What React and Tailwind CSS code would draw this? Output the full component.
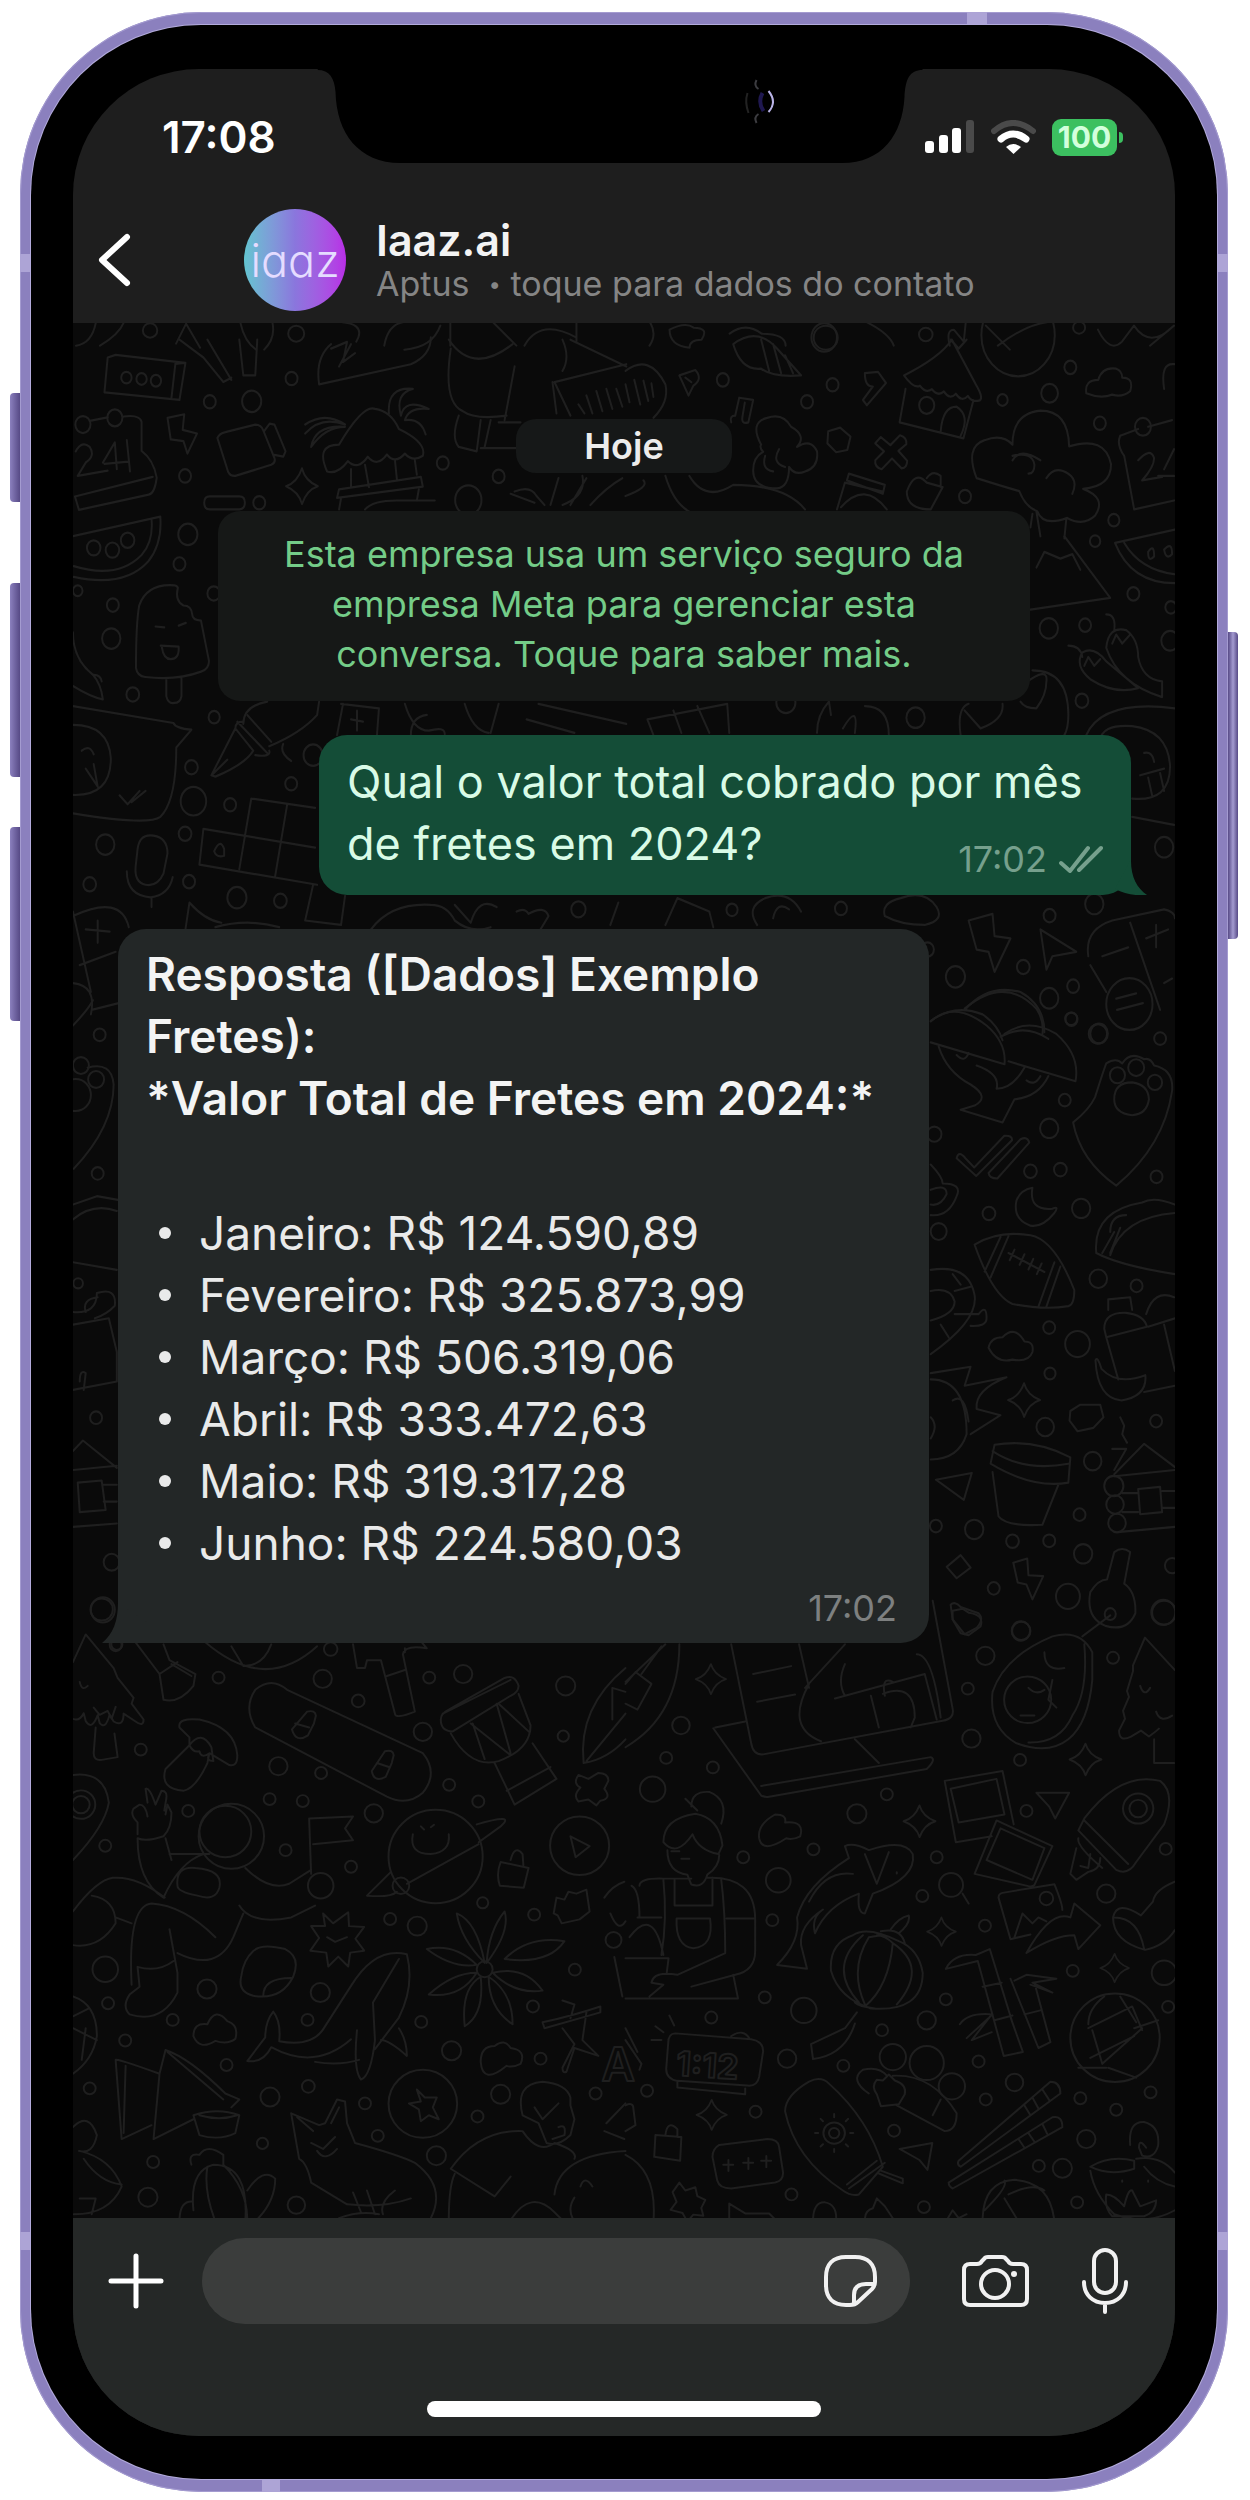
import React from "react";

const MONTHS = [
  ["Janeiro", "124.590,89"],
  ["Fevereiro", "325.873,99"],
  ["Março", "506.319,06"],
  ["Abril", "333.472,63"],
  ["Maio", "319.317,28"],
  ["Junho", "224.580,03"],
];

/* Wallpaper doodles, grouped by zone; each zone has its own drawing scale. */
const ZONES = [
  {
    t: "translate(0 322) scale(.4)",
    c: [[375, 22, 18], [740, 30, 20]],
    s: [],
    p: [
      "M190 60Q230 55 240 0M250 60Q300 30 310 0M440 55l25-50 35 60M600 0q10 50 40 70M680 0q10 40-20 70M830 0q90 0 60 50M960 60q10-60 60-60M1010 70q70-5 90-60M1125 0v60M1230 0l60 60M1310 60q40-70 130-20M1440 0v50",
    ],
  },
  {
    t: "translate(625 322) scale(.4)",
    c: [[750, 32, 17], [1133, 15, 15], [500, 40, 30]],
    s: [],
    p: [
      "M60 0q20 30 0 60M110 20q40-20 60-5 40 0 20 30-30 0-30 20-50-5-50-45M260 30q40-30 80 0 60 0 60 30M600 0q60 30 70 60M810 60q-10-40 10-40l25 30 5-50M900 10l60 60M930 60q80-60 140-60M1180 20q30 60 60 30l30-40q40 60 100 0M1310 60l60-50",
    ],
  },
  {
    t: "translate(0 340) scale(.3986 .4464)",
    c: [[317, 85, 13], [355, 88, 13], [391, 92, 13], [526, 139, 15], [631, 138, 24], [731, 87, 15], [464, 305, 15], [650, 365, 15], [1110, 276, 15], [1174, 359, 33], [1250, 306, 15], [471, 436, 24], [450, 502, 15], [283, 594, 15], [279, 669, 23], [333, 794, 16], [537, 845, 14], [536, 568, 16], [480, 957, 16], [485, 1033, 32], [577, 1041, 15], [730, 994, 15], [264, 1130, 23], [464, 1106, 16], [225, 1219, 16], [474, 1213, 15], [594, 1249, 24], [703, 1256, 16], [785, 930, 24], [208, 190, 19], [288, 175, 19], [235, 466, 17], [282, 471, 17], [320, 449, 17], [1450, 1275, 18], [195, 562, 12]],
    s: [[757, 328, 40]],
    p: [
      "M270 40L290 34 465 52 450 135 262 118ZM440 52L430 130M462 52l-22 2",
      "M420 175l42-8-4 35 36 8-24 45-10-28-32-4Z",
      "M545 220Q550 210 565 207L640 190Q655 190 660 203L688 265Q692 275 680 280L590 305Q578 306 572 296ZM662 205l14-17 12 2 28 60-6 12-22-4",
      "M225 182l45-8M310 172q40-5 45 12v65q30 20 38 60-5 35-20 38l-175 34-10-30 195-44M190 250q15-25 35-10 15 20-10 35l-20 30 75-12M258 275l30-45 5 60M262 278l60-5M318 225l8 70",
      "M765 190q50-30 100 0-60-20-100 20M780 240q10-50 85-45-50 0-85 45M820 295q-30-60 30-60 60-90 90-80 40 5 60 45 70 30 60 60-25 15-45-5-25 25-45 2-25 30-48 5-25 32-50 10-25 30-52 23ZM975 165q-5-60 60-55-45 10-30 60 10-40 70-15-50-5-60 25 40-5 52 32M850 335l205-28 5 22-215 25ZM915 280l10 50M990 268l5 45M880 290v40M1040 270l5 32M855 355l-5 25M1050 335l-5 25M915 380q20-20 80-20h95",
      "M512 365q0-14 14-14h74q14 0 14 14t-14 15h-74q-14 0-14-15Z",
      "M183 440L402 396q5 60-30 100-60 60-187 35M380 402q5 50-25 80-60 55-170 25",
      "M438 550q5 0 8 5-8 30 14 40 20 0 22 20 0 12 22 14l20 90q0 18-20 24-60 20-140 12-20-2-23-20 0-100 8-140 20-50 89-45ZM390 642l22 2M448 640l18-6M403 685l45 2q2 28-20 28-18 0-22-26M417 758v40q5 18 20 15 15 0 18-15v-40",
      "M183 655q0 60 50 95 20 20 25 55-30-5-75-30M235 750q18 0 20 15",
      "M183 820L435 858q5 12 45 15l-38 40q0 120-40 155-30 20-219-8M183 862q90 0 95 75 0 85-95 82M300 1020l20 20 30-30M330 1035l35-25M205 920q20-15 30 8M215 960l30 40M235 950l10 50",
      "M530 975l60-105 45 50q-20 30-95 58ZM595 855l75 70M590 870q0-15 20-15M640 930q40 5 35-10M670 810q-60 10-60 50M675 910q80-30 120-70l5-30M530 975l40-35M710 905q-10 20 20 38",
      "M630 1027L790 1048M630 1027L600 1185M510 1095l280 42M510 1095l-10 80 295 45M720 1040l-30 160M785 1220l-20 80 90 10 10-65M537 1145q15-30 25-5v15q-20 5-25-10",
      "M345 1140q5-35 40-30 35 5 35 40l-10 45q-15 30-45 25-28-5-25-40ZM318 1190q0 55 60 58 45-5 55-45M380 1250v20",
      "M183 1290q120-50 140 25M183 1280l45 180M200 1400l90-30M215 1320l60 5M245 1300v50M183 1440q60 5 45 70M230 1500l90-20",
      "M800 100q-10-60 30-90M800 100l230-45q50-20 50-60M830 20l40-15-10 45 30-20M850 60l30-50M450 0l60 40 50 55 20-10M520 0l60 90M600 0l10 80 30 0 5-80",
      "M1125 0q60 80 160 10M1130 20q-20 120 30 140 30 20 110 10M1290 60l-25 120M1150 170q-20 50 0 70l45 10 10-70M1215 240l15-60M1205 243l90 0M1250 185h55M1410 0q20 40 0 70M1390 95l180-40M1385 95l10 70M1390 95l40 75M1450 145l15 20M1470 125l15 40M1495 115l15 45M1520 110l15 45M1545 110l15 40M1430 0l140 60M1380 370l20-60M1410 370q60-20 50-65M1430 370l40-60M1280 345l60 20M1290 340q40-15 55 10l20 20M1480 370q40-40 80-60",
      "M620 840l60 60M855 815l95 10-5 60M860 815l-15 70M895 830v45M880 850l30 5M1015 815q20 60 60 60 40-10 40 8M1030 885q0-40 40-45M1165 815q20 60 60 65M1250 815l-20 65M1320 850l120 30M1350 815l220 45",
      "M465 1320l10-60q40 40 80 45M540 1315q80-20 160 0M930 1320q50-60 150-55 40 0 60 35M1140 1265l40 40q20-60 65-35M1140 1300q40 30 90 15M1295 1280q20-10 30 5 40-20 50 5l-20 30M1550 1260l-20 50",
    ],
  },
  {
    t: "translate(625 340) scale(.3986 .4464)",
    c: [[244, 90, 15], [455, 139, 15], [519, 101, 15], [945, 135, 13], [1115, 62, 15], [1063, 120, 21], [1189, 187, 15], [851, 351, 15], [1224, 404, 14], [1177, 451, 13], [1273, 569, 15], [1061, 646, 23], [1152, 639, 15], [1367, 599, 14], [1365, 674, 22], [1144, 808, 16], [727, 846, 23], [1350, 1136, 23], [1175, 1263, 23], [1063, 1289, 15], [997, 1404, 16], [827, 1426, 24], [1122, 1447, 15], [1062, 1474, 23], [1118, 1521, 15], [267, 1276, 14], [540, 1273, 15], [1187, 1553, 22], [755, 147, 19], [1297, 195, 20], [1263, 1487, 58], [984, -10, 92], [757, 1365, 16], [498, -5, 32], [402, 812, 24]],
    s: [],
    p: [
      "M0 70q60-40 100 30 10 40-30 75M0 100l10 40M22 90l15 55M45 92l12 45M65 98l5 30",
      "M135 80l40-12q20 20-5 35l-12 22ZM150 85l15 10",
      "M265 185q-5-15 10-15l10-40 35 5-12 50q-18 5-15-12l6-32",
      "M270 10q20 60 70 55 30 20 100 15l-60-60q-50-50-110-10ZM340 0l20 70M370 10l20 65M400 35l20 40",
      "M600 75q0 30 20 30l-25 30 10 12 48-50-20-25Z",
      "M698 80q90-40 120-80l60 100q20 30 10 36-20 5-30-10-15 15-30-5-15 15-30-5-15 12-30-5-15 10-30-8-15 8-40-23ZM702 110l-15 75 160 36 25-85M790 205q5-55 40-55 35 20 10 65M815 0l20 20 20-20",
      "M508 205l30-8 26 20-8 30-28 5-22-20Z",
      "M640 218l24 18 24-22q18 5 16 20l-20 15 22 22q0 16-14 17l-24-22-26 24q-18-5-16-20l22-20-22-18Z",
      "M340 235q-30-50 15-60 40-12 60 20 40 20 15 45 35-20 50 10 5 35-30 45-25 10-40-10 0 45-30 48-60 0-60-40 0-30 25-42-10-10-5-16M350 260q-10 30 20 35M385 245q-20 30 15 40",
      "M880 310q-30-70 20-85 45-15 70 10 0-70 70-76 70 0 72 80 90-25 105 40 0 50-70 55 60 20 30 60-30 25-70 5-60 20-75-15-30-10-45-45-40-10-107-29ZM970 260q50-10 55 20 0 20-15 20M1055 310q20-30 55-10 25 15 10 45M1030 385l10 55M1105 400l-5 45M970 270q20-30 70 0",
      "M1020 390l-5 30M1100 440l115 138-200 26M1030 510l20-35 40 15 30-10 20 35",
      "M530 380l20-60 95 20M560 300l90 25-5 20-90-30ZM540 375q60-60 115 5M705 340q20-50 50-20l40 10-30 50q-60 0-60-40ZM755 310q15-20 35-5v25M100 305q20 60 60 80M160 305q40 60 110 20 130 0 180 55M0 350q60-20 45-35",
      "M1155 120q-5-30 30-30 10-30 45-25 15 5 15 20 30 0 20 30-20 15-45 8-30 10-65-3ZM1350 110q-10-60 26-55",
      "M1240 215l45-15M1310 195l60-15M1240 215q-10 20 10 45l25 120 100-20M1285 270q30-30 40-5 0 20-30 50l50-8M1350 290l25-45M1335 305h40",
      "M1227 455l150-30M1227 455q40 90 150 90M1250 455q40 60 125 70M1310 475q15-20 15 10-15 15-15-10M1350 470q20-20 20 10-15 15-20-10",
      "M1205 615q25 0 20 35M1205 690q5-50 50-40 30 20 30 60 10 50 60 55v35q-110-30-140-110ZM1110 685q30 0 35 25M1145 700q30-15 60 20l80 60q-60 15-120-20-40-30-20-60ZM1220 680l10-20 15 20 20-20M1150 730l10-20 15 20 15-15",
      "M1020 740q90 0 90 100 0 30-10 45M1000 770q60-40 55-5 0 30-25 60-30 0-40-15M840 885q-10-60 20-70M850 830l40 40q60-20 55-55M480 880q0-40 30-70l5 30M545 870q40-60 30 10M600 820q60 0 60 65M55 850l200-35 5 65M55 850l15 35M120 830l20 50M180 820l30 60",
      "M1155 885q40-80 222-60M1190 900q0-40 80-35 90 10 95 90 0 80-95 72M1300 925q20-5 25 20M1290 975l60-15M1310 980l10 40M1340 970l10 40M1270 1068l105 18",
      "M100 1310l30-60 80 30 10 35M330 1310q-30-40 20-60 60-20 90 30M370 1295q10-40 40-20M650 1290q-10-30 40-40 60-20 90 20 20 30-30 40-60 0-100-20Z",
      "M860 1300l60-15 5 50 40 5-40 75-15-45-30-5Z",
      "M1040 1320l90 50-60 10-15 30Z",
      "M1160 1380q-10-60 60-80l130-25q27 5 27 20M1165 1400l40 60M1265 1305l75 195M1195 1380l65-20M1330 1310v50M1305 1340l55-20M1230 1475l50-12M1232 1500l65-15M1370 1430l-20 10",
      "M850 1500q60-60 140-40 60 30 60 90M765 1525q60-40 130-15 40 25 50 58M940 1560q60-30 120 5",
    ],
  },
  {
    t: "translate(0 1000) scale(.3986 .4209)",
    c: [[250, 82, 15], [203, 155, 20], [241, 188, 20], [245, 411, 15], [196, 672, 12], [241, 991, 15], [280, 1334, 20], [258, 1447, 30], [290, 1530, 15], [190, 225, 38]],
    s: [],
    p: [
      "M183 60q40-40 50-60M220 160q60-15 65 40 0 100-100 200M183 485l60-20 60 10M183 520q50-40 110-20M183 622l110 18",
      "M183 740q60 5 60-45 50-15 45 30-20 20-50 30M183 770l90-15 20 80v70l-110 20M215 740q-10-30 30-35M200 905q0-30 15-20l-5 40M183 1070l25-25 85 65M183 1115l110-10M195 1145l60-5 10 70-65 5ZM260 1150h33M260 1190h33M183 1250l110-8",
    ],
  },
  {
    t: "translate(625 1000) scale(.3986 .4209)",
    c: [[1117, 44, 15], [1184, 80, 23], [1340, 91, 15], [1233, 178, 19], [1280, 160, 20], [1327, 195, 18], [1101, 237, 15], [1062, 304, 23], [1015, 406, 16], [1090, 402, 16], [1331, 419, 15], [911, 506, 16], [1142, 494, 23], [1185, 661, 22], [1281, 678, 15], [1062, 777, 15], [1133, 816, 31], [1064, 886, 14], [1052, 1013, 22], [1330, 999, 15], [1171, 1094, 22], [1138, 1221, 15], [874, 1256, 23], [970, 1284, 16], [1062, 1283, 15], [1147, 1314, 23], [923, 1396, 15], [1109, 1415, 30], [991, 1497, 23], [1348, 1453, 30], [785, 549, 20], [778, 1248, 15], [774, 318, 18], [1370, 1342, 18], [1224, 1153, 24], [1227, 1197, 22], [1232, 1241, 22], [1215, 1457, 14]],
    s: [[999, 949, 40]],
    p: [
      "M850 20q100-80 180 0 20 30 15 60M765 50q60-50 140 10 50 40 45 92L765 100M950 80q60-40 130 0 60 50 48 112L960 145M785 110q20 60 80 90 50 30 10 50l-35 10 105 30 30-55q60-5 85-55M830 130q20 20 30-5M880 155q60 20 50 55 40 0 70-50M1005 190q20 15 35-10",
      "M1205 150q25-15 40 0 20-30 55-10 15-5 25 15 50 10 45 60-20 130-140 225-90-60-108-150 40-30 55-60 20-60 28-80ZM1225 235q0-40 45-40 40 5 42 40-5 35-42 38-45-5-45-38Z",
      "M830 375q5-20 22 0l22 22 75-75q20-2 20 10l-90 85ZM910 410l80-80q18-8 22 8l-80 85q-20 0-22-13Z",
      "M1020 445q-10 55 50 50 18-8 5 10-30 35-60 30-45-15-35-60 10-25 40-30ZM765 390q30 30 30 45 50 0 35 30-20 50-65 45M765 450q40-15 40 10-15 30-40 25",
      "M875 580q60-35 140-22 60 10 110 130 0 35-15 38-60 10-140-5-50-20-95-141ZM940 562l-40 82M960 560l-45 98M1075 622l-40 105M1090 632l-35 95M960 600l90 45M975 592l-12 25M1000 603l-12 25M1022 614l-12 25M1043 625l-12 25",
      "M1180 600q-10-100 115-120 30-15 82 5M1180 600q60 30 197 50M1215 605q30-90 162-100M1215 550q0-40 40-40M1195 600l30-50M1240 540l-25 60",
      "M765 640q95-15 110 60 10 60-110 140M765 690q50-10 60 25 0 30-60 45M820 650l20 25M825 690l40-10M825 745h60q20-25 20 10 0 20-40 18M790 770l20 30",
      "M910 825q5-25 35-25 30-30 55 10 25 0 20 25-10 25-50 18-40 10-60-28Z",
      "M1210 710l55-5 5 30M1210 710v25M1200 780q0-40 55-38 45 5 52 33L1205 800 1200 780M1205 800l30 100M1350 770l27 110M1310 775l67-20M1305 745q20-60 70-40M1178 855q5-12 15 20 40 40 110 15 5 50-60 60-60-5-65-95ZM1300 930l77-15",
      "M765 885l100-15-15 45 105-20q-80 30-75 75l60 15-75 45M765 900q90 0 90 130-20 60-90 60M820 950q30-20 40 50M765 990q20 20 0 50",
      "M1115 975l25-15 50 0 8 30-25 25-40 8-20-25ZM1240 990l10 20-5 20 12 20M1220 1065h35l-30 50M1225 1125l75-72 77 55M1225 1130l152-15M1285 1160l55-5 5 60-55 5ZM1245 1170h40M1245 1215h40M1345 1165h32M1345 1205h32M1240 1262l137-12",
      "M925 1055q100-15 190 30l-5 60q-90 15-195-45ZM920 1070q80 50 190 30M920 1120l15 105q20 25 110 20l40-95",
      "M778 1138l90-16-20 64ZM805 1345l35-28 25 30-35 25ZM972 1335l35-10 3 40 37 2-27 55-15-35-22-5ZM815 1435q10-10 25 5l45 15q15 15-5 35l-30 15-30-35ZM1225 1310q20-15 40 0l-15 75q30 20 28 70-20 45-75 30-50-20-38-80 20-30 42-30ZM1215 1460l-70 50",
    ],
  },
  {
    t: "translate(0 1600) scale(.3986 .3954)",
    c: [[255, 22, 28], [293, 110, 14], [548, 194, 15], [829, 122, 17], [809, 197, 23], [898, 253, 16], [1076, 194, 15], [1161, 185, 23], [1418, 215, 24], [1412, 342, 14], [1060, 331, 23], [353, 376, 15], [698, 418, 23], [805, 435, 15], [676, 501, 15], [759, 506, 15], [472, 531, 15], [937, 537, 23], [1126, 465, 15], [1199, 507, 15], [264, 619, 15], [716, 630, 15], [880, 672, 15], [1210, 763, 14], [1339, 793, 15], [978, 804, 15], [1046, 822, 24], [264, 931, 32], [519, 981, 24], [803, 990, 24], [271, 1017, 15], [433, 1059, 15], [771, 1059, 15], [314, 1111, 15], [568, 1173, 15], [225, 1232, 15], [677, 1254, 24], [773, 1227, 16], [915, 1270, 15], [1056, 1064, 15], [1132, 1137, 24], [1336, 1025, 15], [1355, 1157, 15], [1255, 1247, 24], [1197, 1303, 15], [1493, 1245, 15], [947, 1352, 15], [1094, 1402, 24], [658, 1371, 14], [384, 1418, 15], [371, 1507, 24], [743, 1527, 22], [1441, 932, 15], [1538, 857, 20], [580, 595, 82], [565, 583, 65], [804, 720, 32], [1092, 646, 118], [1005, 720, 21], [1453, 619, 74], [1060, 1271, 86], [203, 515, 22], [203, 515, 36], [1215, 931, 20]],
    s: [],
    p: [
      "M183 155l32-70 70 85 10 25 40 50-5 15 30 40q0 20-20 5l-30-20q0 35-25 20l-10-18q-10 40-25 22l-5-20q-15 40-30 15l-5-20q-10 20-25 15M240 320l-5 65q0 20 20 17l40-7-8-60M235 270l15 18 20-10 10 20 10-30M200 205q5 25 20 10",
      "M340 105l60 80 10 65q40 10 75-35l5-30-65-35-15-40M400 185l45-30M430 160l50 30M515 105q150 130 280 10M580 115l30 50q50 0 70-55M885 110l10 60 20 0 5-20 35 0 35 135q0 15 50-5l-30-145q5-25 60-15l-15-18M970 190l45-15M1015 130v-10",
      "M640 225q40-35 80 0L1060 385q40 50 0 100-40 35-90 10L640 320q-30-50 0-95ZM770 280q20-5 22 10l-5 20-15 30q-30 20-40-15ZM740 310l35 10M965 380q20-5 22 10l-5 20-15 35q-30 15-35-15ZM945 410l30 10",
      "M450 320q-5-25 50-20 90 20 95 90 0 30-20 25l-50-30-5 25q-30 65-60 70-60-5-45-55l60-60 0-20ZM475 365q30-40 55 5l5 35q-20 0-10-20-20 15-25-5-15 5-25-15",
      "M1105 300q0-15 20-25l140-80q25-10 35 20 0 15-20 25L1135 330q-30 0-30-30ZM1110 285L1280 200M1130 335q50 90 120 70 80-30 80-90l-30-80M1185 310l30 90M1245 260l35 125M1180 310l100 80M1250 260l75 70M1240 410l50 105 105-65-60-90M1270 480l110-60",
      "M1568 170q-120 100-105 240 60-10 105-60M1470 405l98-120M1535 300v-80l33 10",
      "M1450 440l25 10 25-15q25 0 25 20l-10 20q20 25-10 30l-10 12-20-15-25 5q-15-15 5-35-20-10-5-32ZM183 440q80-10 90 70-10 60-90 145",
      "M345 590l0-30q-20-20-10-35l15-10q15 0 20 30M345 600q20 10 65-5 20-20 20-60l-10-20-5 25M370 510l-5-35q10-5 25 40l15-35q15 0 12 20l-5 30M345 600q0 110 65 150M415 600l15 55M425 640h100M410 750q40-90 100-110M183 785q60-80 100-85 60-5 130 50M230 745q60 10 60 70-40 65-107 55M290 800l40 15M330 970q-10-200 50-205 80 5 160 85M425 830l20 110v50q-40 80-120 55-20-20 0-50l25-20-5-50M345 925q50 15 90-15M445 890q100 50 140-40l25-60M600 770q30 50 130 30l60-30M615 675q60 60 110 40l55-35M780 690l-5-140 110-5-20 30 20 30-100 10M445 720q-5-50 45-45 70 5 60 50-10 35-55 20-50-10-50-25Z",
      "M1195 565q100-30 60 5l-55 40M980 685l-60 60q60 5 75-10M1020 715l180-100M1035 590q-10 50 45 50 50-5 45-50M1055 570l8 8M1080 572l8-6",
      "M1255 660l70 15-12 50-60-5q-10-30 2-60ZM1280 655q10-40 30-15l2 28M1430 595l48 25-35 28ZM1395 750l20 5 10-20 20 5 25-10 8 55-25 20-45 10-10-20-10-5Z",
      "M810 790l25 25 38-28 2 35 38 2-22 30 22 30-35 5-5 35-25-25-25 25-5-35-40-5 22-32-20-30 35 0ZM820 850l20 12 30-12",
      "M635 885q20-20 80-5 40 20 20 70-30 60-100 48-40-10-30-50 5-40 30-63ZM660 998q0-45 70-45",
      "M620 1163l45-60q0-40 20-65 20 25 15 75 80 15 110-30l70-110q60-100 140-80 20 80-20 160l-60 80M620 1163q40 5 60-35 110 60 200-20M790 1165q60 10 110-5M895 1085q-10 100 10 125 25-10 35-100l-5-95 65-110M955 1110q20 0 65 40 0-40-20-70",
      "M485 1100q0-35 35-30 20-45 50-8 30 10 20 45-20 15-50 5-40 25-55-12ZM1205 1165q0-40 35-40 25-20 40 5 40 5 25 40-20 10-35 5-60 50-65-10Z",
      "M1215 915q-60-60-70-125 50 20 70 125ZM1220 915q5-80 45-130 15 50-45 130ZM1195 920q-60 10-125-40 70-15 125 40ZM1265 905q60-60 150-45-40 60-150 45ZM1195 940q-60 0-120 55 80 10 120-55ZM1235 940q80-20 125 45-70 10-125-45ZM1205 950q-50 30-40 125 50-30 40-125ZM1225 950q60 40 60 120-60-40-60-120Z",
      "M1360 1065q70-15 145-40v15l-140 40ZM1410 1010l30 10-10 35M1470 1040l-10 70 40 40-60-20-20 60q-10 5-10-10l30-60-30-40M183 1000q60 20 60 100-10 60-60 95M183 1080l60 30M183 1050l40-20M205 1160l10-80",
      "M290 1160q0-5 110 35M290 1160l15 200 75-35M315 1175l-5 170M400 1195l15-60q60 20 150 110l35 15-20 20M400 1195l-15 165 100-50M420 1140l140 120M485 1300q60-20 115 0l-10 45q-40 20-90 5ZM500 1300q50 15 95 0",
      "M730 1295l70 30 15-5 30-60 20 5 5 55 20 50q110 30 150 50 80 60 40 140M730 1295l20 115q20 10 30 60l90 55q90 10 160-15M745 1305l40 35M830 1320l20-40M780 1370l30 15 30-30M795 1390q20 30 50-5M885 1495l20 50M920 1490l20 60M990 1490q-40 30-30 60M850 1560q50-20 100-10",
      "M1045 1235l20 20 30 0 -10 25 15 30-25-10-20 15-5-30-25-15 30-5Z",
      "M1310 1300q-20-80 50-85 60 5 70 40v20l10 35-10 40q-30 30-60 20l-20-50q-40-20-40-20ZM1340 1280l20 30 40-40M1400 1330q20-10 15 20l-30 10M1130 1435q70-100 180-95 40 60 80 30 60 20 50 40M1130 1435l110 70 40-50M1125 1568q0-90 15-120M1280 1565q50-80 110-20l20 20M1390 1500q10-100 178-110M1440 1568q-20-30 0-60M1455 1480q10-30 30 0",
      "M485 1540q-10-100 50-115 90 0 80 143M520 1430q-10 60 20 138M560 1425q60 60 60 140M480 1425q-10-30 20-25 20-30 60 0v25M620 1490q40-60 70-30 0 60-50 108M450 1568q0-50 30-50M183 1330q40-40 60 20-10 50-45 40M200 1390q80 20 105 90-30 70-120 70M210 1410q40 60 95 65M200 1510l40 0-10 40",
      "M1515 750q20-30 50-40M1530 790q20 50 38 20M1540 900l20 100M1520 1320l48-50M1515 1340l50 20",
    ],
  },
  {
    t: "translate(625 1600) scale(.3986 .3954)",
    c: [[992, 76, 23], [902, 139, 23], [858, 222, 15], [1222, 144, 15], [867, 348, 23], [989, 402, 15], [139, 315, 22], [102, 397, 15], [219, 421, 15], [68, 476, 32], [655, 489, 15], [580, 538, 24], [1005, 531, 15], [471, 628, 15], [295, 648, 15], [780, 648, 15], [744, 746, 15], [816, 718, 30], [383, 706, 31], [368, 807, 15], [901, 821, 15], [1205, 740, 23], [1121, 935, 15], [1350, 940, 31], [1360, 1026, 15], [803, 1007, 15], [755, 1060, 23], [643, 1085, 15], [349, 1002, 15], [447, 1035, 32], [215, 1053, 15], [405, 1157, 23], [546, 1175, 15], [885, 1164, 15], [975, 1217, 22], [903, 1260, 15], [1140, 1257, 15], [1316, 1242, 15], [1230, 1286, 15], [1155, 1360, 23], [54, 1238, 15], [326, 1291, 15], [673, 1339, 15], [1036, 1428, 15], [1095, 1434, 24], [416, 1500, 15], [748, 1532, 15], [1132, 1520, 15], [1354, 627, 15], [1285, 525, 38], [1285, 525, 22], [1055, 752, 17], [670, 1153, 33], [755, 1168, 43], [818, 1227, 33], [523, 1345, 27], [523, 1345, 13], [1008, 250, 59], [1227, 1104, 112], [1350, 30, 30]],
    s: [[214, 198, 38], [1153, 401, 40], [737, 557, 40], [792, 836, 36], [1226, 928, 36], [216, 1299, 38]],
    p: [
      "M135 110q0 180-135 260M100 110L0 205M0 210l25-30 40 30-35 65-30-15M40 185l50-70",
      "M820 25l25-5 15 10q40 5 30 35l-30 22-20-5-20-35ZM265 110l50 250q5 30 30 28l450-85q30-5 25-30L770 0M435 110l25 110M320 185l95-20M330 255l95-18M550 160q-20 45 0 80M525 247l225-62 30 115M450 220l100-110M460 210q-60 110 30 145M615 240l20 80M650 240q-10-50 20-35M645 235q80-30 80 60l-10 25M730 135q40 0 60 160M575 350l60 60M225 320l75-15M220 322l120 170q10 5 20 3L755 425q25-25 10-30L340 468",
      "M1070 90q70-20 100 40v70q-10 110-60 150-50 40-130 10-70-40-60-130 30-90 150-140ZM1150 110q10 120-30 180-30 70-110 68M1050 130q0 50 50 40M1010 220q20 20 40 5M990 290h35M1070 200l-10 50 20 20",
      "M1377 175l-75-82-30 70v15l-15 50 5 15-15 35 5 20-15 30q0 30 30 15l25-15 20 15q20-15 25-20M1325 350v60l50 0M1290 215q10 30 25 5M1330 280q10 30 40 10",
      "M1150 550q90-120 190-95 40 30 10 110l-70 95q-20 35-50 20L1135 580ZM1150 555l110 110M1135 600q-5 20 60 75M1130 625l-15 65 15 15 30-20q30-5 30-35M1140 670l20 5 5-35",
      "M800 455l145-25 28 135M800 455l28 155 90-15M815 475l115-25 20 90-115 20ZM930 555l140 65-45 98q-5 5-15 3L875 690ZM940 575l110 50-30 80-115-50ZM935 750q0-10 10-12l130-22q20 50 20 65M935 750l30 105 50-12M975 850l20-60 25 25 15-15 20 10M1005 890q60-110 110-90l10-35 65 55-55 60-10-35q-50 0-120 45ZM1030 485h82l-35 65-15-30ZM845 740l15 25",
      "M1377 710q-50 20-55 50l-30 35q-60-40-70 5 0 60 80 82 50-10 75-50M1225 800q60 0 75 80",
      "M335 600q-5-35 40-60 30 0 25 20 50-5 38 35-20 10-35 5-60 40-68 0Z",
      "M150 500l30 30M165 520q0-40 45-37 50 20 30 80M95 610q0-60 80-72 60 10 68 80l-10 22q-50-10-65-50-40 60-73 20ZM105 630q0 55 50 62l10 25q30 10 40-25 30-20 30-50M115 633h20M140 652h20M35 720q0-20 60-18h70M205 700q120-5 120 105v80q0 50-50 60l-110 30M95 705q10 100-5 190M123 705v65h95v-70M240 705q10 80 10 185L130 945q-60-10-65 20l30 5-35 30M128 803h84q10 70-42 75-45-5-42-75ZM253 803h72M270 945l12 60H0M0 903h108l-5 40M10 850q60-80 85 45M30 800h60M35 800q0-70-20-80",
      "M550 620q20-10 60 10 90-30 110 10 10 60-100 100l-20 50q-20 0-15-50-80 30-110 100-10-40 20-60-60 40-55 90l15 60-75-10q60-60 50-120 20-80 130-150ZM460 760q40-80 110-70M600 640l30 75 30-80M680 686v3",
      "M640 835q50-10 60 30M665 830q20-30 45-35 5 20-25 45M570 845q-60 20-55 90 20 70 100 95 130 10 130-90-10-60-60-80-80-40-115-15ZM595 845q-90 80-10 170M630 845q20 0 40 20-10 110-70 160M670 865q90 60 10 155M640 845l-30 5q-50 80-10 170M575 1015q10 10 50 15M580 1040l-30 40-85 40 5 38q80-10 105-90",
      "M803 930q20-40 75-35l35-15 55 180M803 930l80-20 65 240 48-10-30-85M895 975l48-10M965 955l70 175 30-15-40-150M975 960l30-15 75 10-60 10 50 25-55-20M1000 1045l40-10M925 1060l45-12M838 1070q20-30 80-25l-50 65 50-20M855 1105l65-60",
      "M1160 1080l110-55 25 60M1170 1085l25 85M1195 1170l100-90M1165 1155l110-55M1160 1070q0-40 40-70M1275 1080l60-20M1210 1180l70 25M1240 1000l40 65M1205 1180l-70 0",
      "M75 1075l20 15M110 1048l12 25M65 1110h25M125 1093l190 15q30 5 30 30l-10 65q-5 25-30 22l-175-12q-28-5-28-30l5-65q0-25 18-25ZM130 1215v15l170 17v-15M265 1100q30-20 45 5M0 1110l40 60-5 15M0 1080l30 60",
      "M400 1290q0-40 60-75 30-15 50 5 100 90 135 210l-60 70q-20 5-40-10-120-80-145-200ZM560 1485l90-65M555 1475l75-60M640 1440l55 20 0 12-60-25M523 1305v-8M523 1385v8M483 1345h-8M563 1345h8M495 1315l-6-6M552 1315l6-6M495 1373l-6 6M552 1373l6 6",
      "M610 1245q-50-35-15-60 40-10 60 15M630 1210l15 2 15-15 15 15q30 10 25 35l-15 25-45 5-10-30q-15-20 0-37ZM670 1200q100-5 160 95 0 45-30 45L680 1275M770 1300l20-40",
      "M835 1415l230-200q25 0 25 30L840 1430q-10-5-5-15ZM1000 1275l15 25M1020 1255l15 28M1045 1235l18 28M810 1470l260-165q25-5 25 25L820 1485q-10-5-10-15ZM985 1360l15 22M1010 1345l15 22M1045 1322l12 25M687 1385l82-15-12 68-20-25Z",
      "M235 1375l120-15q28 0 30 20l10 65q0 20-20 25l-110 15q-30 0-35-20l-12-60q0-20 17-30ZM245 1425h25M258 1413v28M295 1420h25M308 1408v28M340 1415h25M353 1403v28M75 1350l65 5-3 60-65-10ZM100 1350q5-40 30-15v20M0 1400q80 40 70 168M0 1275q20-10 20 10l5 40-25 15",
      "M135 1470l15 20 25-8 5 22 20 10-10 20 5 20-25-3-15 18-12-22-30-8 15-20-10-25ZM260 1568l0-45 40 25 60 0 20 20M470 1568q0-50 30-48 30 5 28 45M600 1565q0-25 20-30l10-25 20 20 20 30M895 1568q0-100 80-105 90 5 100 105M900 1540q60-60 50-75M960 1500q60-30 90-10M950 1510l30 50M805 1565l15-25 15 20 20-10",
      "M1265 1375q-5-60 35-58 40 10 35 60-10 35-40 25l-8-20q0-25 18 0M1165 1430q50-30 110-15v20q-60 20-110-5ZM1280 1410q60-10 97 35M1165 1440q10 60 60 110 80 30 152-10M1300 1430q30 40 77 50M1205 1500q20 0 45 30 10-45 20-40 10 20 20 40l40-15q0 30-30 40h-80q-20-20-15-55ZM1245 1465v3M1310 1465v3",
    ],
  },
];

function Wallpaper() {
  return (
    <svg
      className="absolute inset-0 h-full w-full text-[#1f1f1f]"
      viewBox="73 322 1101 1896"
      preserveAspectRatio="xMidYMid slice"
      fill="none"
      stroke="currentColor"
      strokeWidth="2"
      strokeLinecap="round"
      strokeLinejoin="round"
      aria-hidden="true"
    >
      {ZONES.map((z) => (
        <g key={z.t} transform={z.t} strokeWidth="5">
          {z.c.map(([x, y, r]) => (
            <circle key={`${x}-${y}-${r}`} cx={x} cy={y} r={r} />
          ))}
          {z.s.map(([x, y, r]) => (
            <path
              key={`${x}-${y}`}
              transform={`translate(${x} ${y}) scale(${r / 10})`}
              strokeWidth="1.2"
              d="M0-10Q2-3 10 0 3 2 0 10-2 3-10 0-3-2 0-10Z"
            />
          ))}
          {z.p.map((d) => (
            <path key={d.slice(0, 24)} d={d} />
          ))}
        </g>
      ))}
      <text x="675" y="2074" fontSize="34" fontWeight="700" transform="rotate(4 675 2074)">1:12</text>
      <text x="601" y="2080" fontSize="46" fontWeight="600">A</text>
    </svg>
  );
}

function Notch() {
  return (
    <svg className="absolute left-1/2 top-0 -translate-x-1/2" width="613" height="94" viewBox="317 68 613 94" aria-hidden="true">
      <path
        fill="#000"
        d="M317 68V69C329 69 334 77 335 91C336 132 358 162 400 162H842C881 162 902 134 904 96C905 78 909 69 922 69V68Z"
      />
      <path d="M768 90Q777 101 768 111" stroke="#b9b3e6" strokeWidth="2" fill="none" />
      <path d="M762 92Q757 101 763 110" stroke="#1f1850" strokeWidth="4" fill="none" />
      <path d="M756 79q-3 6 2 9M756 122q-3-6 2-9" stroke="#3c3c40" strokeWidth="2" fill="none" />
      <path d="M747 92q-3 9 1 20" stroke="#222" strokeWidth="2" fill="none" />
    </svg>
  );
}

function StatusBar() {
  return (
    <div className="flex h-[136px] items-center justify-between pl-[89px] pr-[52px]">
      <time className="text-[44px] font-semibold leading-none text-white">17:08</time>
      <div className="flex items-center gap-4">
        <svg width="50" height="34" viewBox="0 0 50 34" aria-label="Sinal" role="img">
          <rect x="0" y="21" width="9" height="12" rx="3" fill="#fff" />
          <rect x="14" y="15" width="9" height="18" rx="3" fill="#fff" />
          <rect x="27" y="8" width="9" height="25" rx="3" fill="#fff" />
          <rect x="41" y="0" width="8" height="33" rx="3" fill="#4a4a4a" />
        </svg>
        <svg width="45" height="34" viewBox="0 0 45 34" aria-label="Wi-Fi" role="img">
          <path d="M3 11Q22 -5 42 11" stroke="#4a4a4a" strokeWidth="6" fill="none" strokeLinecap="round" />
          <path d="M10 19Q22 9 35 19" stroke="#fff" strokeWidth="7" fill="none" strokeLinecap="round" />
          <path d="M15 27Q22 21 30 27L22.500 34Z" fill="#fff" />
        </svg>
        <div className="flex items-center gap-0.5">
          <span className="min-w-[65px] rounded-[9px] bg-[#3cc060] text-center text-[30px] font-bold leading-[37px] text-[#d3ffdc]">100</span>
          <span className="h-[11px] w-1 rounded-r-full bg-[#3cc060]" />
        </div>
      </div>
    </div>
  );
}

function Header() {
  return (
    <header className="flex h-[118px] items-center pb-2 pl-[25px]">
      <button type="button" aria-label="Voltar">
        <svg width="33" height="54" viewBox="0 0 33 54" fill="none" stroke="#fff" strokeWidth="6" strokeLinecap="round" strokeLinejoin="round">
          <path d="M29 4L4 27L29 50" />
        </svg>
      </button>
      <div className="ml-[113px] grid size-[102px] shrink-0 place-items-center overflow-hidden rounded-full bg-linear-to-r from-[#62c4d0] via-[#8a76dd] to-[#b82de6]">
        <span className="text-[45px] font-light leading-none text-[#e5dcff] [font-feature-settings:'cv11']">iaaz</span>
      </div>
      <div className="ml-[30px]">
        <h1 className="text-[43px] font-semibold leading-[48px] text-[#f3f3f3]">Iaaz.ai</h1>
        <p className="flex items-center whitespace-pre text-[34px] leading-10 text-[#858585]">
          Aptus{"  "}
          <span className="text-[22px]">•</span> toque para dados do contato
        </p>
      </div>
    </header>
  );
}

function Question() {
  return (
    <article className="relative mr-11 mt-[34px] grid w-[812px] max-w-full self-end rounded-[28px] bg-[#144d37] pb-5 pl-7 pr-7 pt-4 text-[45px] leading-[62px] text-[#d9fbe7]">
      <svg className="absolute -right-4 bottom-0" width="46" height="34" viewBox="0 0 46 34" fill="#144d37" aria-hidden="true">
        <path d="M29 0H30C30 16 36 27 46 34C34 35 24 33 14 28Z" />
      </svg>
      <p className="[grid-area:1/1]">
        Qual o valor total cobrado por mês
        <br />
        de fretes em 2024?
      </p>
      <div className="relative flex items-center gap-3 self-end justify-self-end text-[36px] leading-8 text-[#76a08d] [grid-area:1/1]">
        <time>17:02</time>
        <svg width="44" height="28" viewBox="0 0 44 28" fill="none" stroke="currentColor" strokeWidth="4" strokeLinecap="round" strokeLinejoin="round" aria-label="Entregue" role="img">
          <path d="M2 18l9 8L29 3M20 25L42 3" />
        </svg>
      </div>
    </article>
  );
}

function Answer() {
  return (
    <article className="relative ml-[45px] mt-[34px] w-[811px] max-w-full self-start rounded-[28px] bg-[#232727] pb-[15px] pl-7 pr-8 pt-3.5 text-[46px] leading-[62px] text-[#e9eaea]">
      <svg className="absolute -left-4 bottom-0" width="46" height="40" viewBox="0 0 46 40" fill="#232727" aria-hidden="true">
        <path d="M16 0C16 18 11 31 0 40H46V20Z" />
      </svg>
      <p className="font-semibold text-[#f3f4f4]">
        Resposta ([Dados] Exemplo
        <br />
        Fretes):
        <br />
        *Valor Total de Fretes em 2024:*
      </p>
      <ul className="mt-[73px]">
        {MONTHS.map(([month, value]) => (
          <li key={month} className="flex items-center">
            <span className="ml-[13px] mr-7 size-3 rounded-full bg-[#e9eaea]" />
            {month}: R$ {value}
          </li>
        ))}
      </ul>
      <time className="relative mt-3.5 block text-right text-[36px] leading-10 text-[#7d8080]">17:02</time>
    </article>
  );
}

function Composer() {
  return (
    <footer className="bg-[#252827] pt-5">
      <form className="flex items-center pl-[35px] pr-[47px]" onSubmit={(e) => e.preventDefault()}>
        <button type="button" aria-label="Anexar">
          <svg width="56" height="56" viewBox="0 0 56 56" stroke="#fff" strokeWidth="5" strokeLinecap="round">
            <path d="M28 3V53M3 28H53" />
          </svg>
        </button>
        <div className="ml-[38px] flex h-[86px] min-w-0 flex-1 items-center rounded-full bg-[#3b3d3c] pr-[33px]">
          <input aria-label="Mensagem" className="min-w-0 flex-1 bg-transparent pl-8 text-[44px] text-white outline-none" />
          <button type="button" aria-label="Figurinhas">
            <svg width="53" height="52" viewBox="0 0 53 52" fill="none" stroke="#f1f1f1" strokeWidth="4" strokeLinecap="round" strokeLinejoin="round">
              <path d="M22 2H31C44 2 51 9 51 22V27C51 30 50 32 48 34L34 47C32 49 29 50 26 50H22C9 50 2 43 2 30V22C2 9 9 2 22 2Z" />
              <path d="M50 29H42C34 29 30 33 30 40V49" />
            </svg>
          </button>
        </div>
        <button type="button" aria-label="Câmera" className="ml-[52px]">
          <svg width="67" height="52" viewBox="0 0 67 52" fill="none" stroke="#f1f1f1" strokeWidth="4" strokeLinejoin="round">
            <path d="M8 9H15C18 9 19 8 20 6L22 4C23 2 24 2 26 2H40C42 2 43 2 44 4L46 6C47 8 48 9 51 9H59C63 9 65 11 65 15V44C65 48 63 50 59 50H8C4 50 2 48 2 44V15C2 11 4 9 8 9Z" />
            <circle cx="33" cy="29" r="14" />
            <circle cx="52" cy="19" r="3" fill="#f1f1f1" stroke="none" />
          </svg>
        </button>
        <button type="button" aria-label="Gravar áudio" className="ml-[53px]">
          <svg width="46" height="66" viewBox="0 0 46 66" fill="none" stroke="#f1f1f1" strokeWidth="4" strokeLinecap="round">
            <rect x="12" y="2" width="22" height="43" rx="11" />
            <path d="M2 34C2 47 11 55 23 55S44 47 44 34M23 55V64" />
          </svg>
        </button>
      </form>
      <div className="mx-auto mb-[19px] mt-[77px] h-4 w-[394px] max-w-full rounded-full bg-white" />
    </footer>
  );
}

export default function App() {
  return (
    <main className="flex min-h-screen flex-col bg-white pb-2 pl-5 pr-[22px] pt-3 font-['Inter','Liberation_Sans',sans-serif]">
      <div className="relative flex flex-1 flex-col rounded-[182px] bg-[#8b80be] px-[11px] py-[13px] shadow-[inset_0_0_0_1px_#a49bd0]">
        <span className="absolute -left-2.5 top-[381px] h-[109px] w-2.5 rounded-l-[4px] bg-linear-to-r from-[#8b80be] to-[#574a86]" />
        <span className="absolute -left-2.5 top-[571px] h-[194px] w-2.5 rounded-l-[4px] bg-linear-to-r from-[#8b80be] to-[#574a86]" />
        <span className="absolute -left-2.5 top-[815px] h-[194px] w-2.5 rounded-l-[4px] bg-linear-to-r from-[#8b80be] to-[#574a86]" />
        <span className="absolute -right-2.5 top-[620px] h-[307px] w-2.5 rounded-r-[4px] bg-linear-to-l from-[#574a86] via-[#a49bd0] to-[#574a86]" />
        <span className="absolute right-[241px] top-0 h-[13px] w-5 bg-[#ada4d6]" />
        <span className="absolute bottom-0 left-[242px] h-[13px] w-[18px] bg-[#ada4d6]" />
        <span className="absolute left-0 top-[242px] h-[18px] w-3 bg-[#ada4d6]" />
        <span className="absolute right-0 top-[242px] h-[18px] w-3 bg-[#ada4d6]" />
        <span className="absolute bottom-[242px] left-0 h-[18px] w-3 bg-[#ada4d6]" />
        <span className="absolute bottom-[242px] right-0 h-[18px] w-3 bg-[#ada4d6]" />

        <div className="relative flex flex-1 flex-col rounded-[170px] bg-black px-[42px] pb-[43px] pt-11 shadow-[0_0_0_1px_#b3abdc]">
          <div className="relative flex flex-1 flex-col overflow-hidden rounded-[126px] bg-[#1e1e1e]">
            <Notch />
            <StatusBar />
            <Header />
            <section className="relative flex flex-1 flex-col items-center bg-[#0a0a0a] pt-24" aria-label="Conversa">
              <Wallpaper />
              <div className="relative rounded-[20px] bg-[#161818] px-[68px] text-[36px] font-semibold leading-[54px] text-[#ececec]">Hoje</div>
              <button type="button" className="relative mt-[38px] w-[812px] max-w-full rounded-[22px] bg-[#161817] pb-[22px] pt-[18px] text-center text-[36px] leading-[50px] text-[#74cc88]">
                Esta empresa usa um serviço seguro da
                <br />
                empresa Meta para gerenciar esta
                <br />
                conversa. Toque para saber mais.
              </button>
              <Question />
              <Answer />
            </section>
            <Composer />
          </div>
        </div>
      </div>
    </main>
  );
}
